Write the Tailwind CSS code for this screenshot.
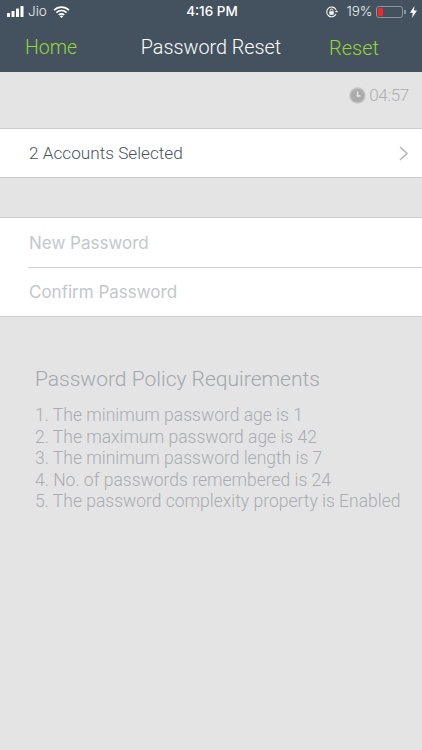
<!DOCTYPE html>
<html>
<head>
<meta charset="utf-8">
<script src="https://cdn.jsdelivr.net/npm/@tailwindcss/browser@4"></script>
</head>
<body class="bg-[#e4e4e4] font-['Roboto',sans-serif]">
<div class="w-[422px] h-[750px] overflow-hidden flex flex-col bg-[#e4e4e4]">
  <header class="h-[72px] bg-[#44525f] text-white flex flex-col">
    <div class="h-[24px] flex items-center justify-between pl-[7px] pr-[5px] font-['Inter',sans-serif] text-[14px] leading-none">
      <div class="w-[120px] flex items-center gap-[4px]">
        <svg width="18" height="12" viewBox="0 0 18 12" fill="#fff"><rect x="0" y="7" width="3" height="4" rx=".6"/><rect x="4.5" y="5" width="3" height="6" rx=".6"/><rect x="9" y="2.5" width="3" height="8.5" rx=".6"/><rect x="13.5" y="0" width="3" height="11" rx=".6"/></svg>
        <span class="text-[13.5px] font-light text-[#e8ebee] -ml-[1px]">Jio</span>
        <svg class="ml-[2px]" width="17" height="12" viewBox="0 0 17 12"><path d="M1 4.2a10.6 10.6 0 0 1 15 0M3.4 6.6a7.2 7.2 0 0 1 10.2 0M5.8 9a3.8 3.8 0 0 1 5.4 0" fill="none" stroke="#fff" stroke-width="1.7"/><path d="M8.5 12l-1.7-1.7a2.4 2.4 0 0 1 3.4 0z" fill="#fff"/></svg>
      </div>
      <span class="font-medium text-[13.5px]">4:16 PM</span>
      <div class="w-[120px] flex items-center justify-end">
        <svg width="14" height="14" viewBox="0 0 16 14" class="mr-[7px]"><path d="M12.6 9.4A5.6 5.6 0 1 1 12.6 4.4" fill="none" stroke="#fff" stroke-width="1.2"/><path d="M11 7l2.4-2 1.6 2.2z" fill="#fff"/><rect x="5" y="6" width="5" height="4" rx=".6" fill="#fff"/><path d="M6 6V5a1.5 1.5 0 0 1 3 0v1" fill="none" stroke="#fff" stroke-width="1"/></svg>
        <span class="text-[13.5px] font-light text-[#eef0f2]">19%</span>
        <div class="ml-[4px] w-[27px] h-[12px] rounded-[3px] border border-[#8d969f] p-[1px] flex"><div class="w-[5px] bg-[#f0262b] rounded-[1px]"></div></div>
        <div class="w-[1.5px] h-[4px] bg-[#8d969f] ml-[1px]"></div>
        <svg class="ml-[4px]" width="7" height="12" viewBox="0 0 7 12" fill="#fff"><path d="M4.4 0L0 6.8h2.8L2 12l5-7.4H4z"/></svg>
      </div>
    </div>
    <nav class="flex-1 grid grid-cols-[1fr_auto_1fr] items-center pl-[25px] pr-[43px] pb-[1px]">
      <span class="text-[#97d63a] text-[19.5px] font-light">Home</span>
      <span class="font-light text-[19.8px] pl-[18px]">Password Reset</span>
      <span class="text-[#97d63a] text-[20px] font-light text-right">Reset</span>
    </nav>
  </header>

  <div class="h-[56px] flex justify-end items-start pt-[14px] pr-[13px]">
    <div class="flex items-center gap-[3px] text-[#aeaeae] text-[17px] tracking-[-0.3px] leading-[18px] font-light">
      <svg width="17" height="17" viewBox="0 0 17 17"><circle cx="8.5" cy="8.5" r="8.3" fill="#c4c4c4"/><circle cx="8.5" cy="8.5" r="6.8" fill="#ababab"/><path d="M8.5 4.5v4.5h3" fill="none" stroke="#ececec" stroke-width="1.3"/></svg>
      <span>04:57</span>
    </div>
  </div>

  <div class="h-[50px] bg-white border-y border-[#cccccc] flex items-center justify-between pl-[29px] pr-[13px]">
    <span class="text-[17.2px] font-light text-[#4a545e] pt-[2px]">2 Accounts Selected</span>
    <svg width="10" height="15" viewBox="0 0 10 15"><path d="M1 1l7 6.5L1 14" fill="none" stroke="#b8b8b8" stroke-width="1.6"/></svg>
  </div>

  <div class="h-[39px]"></div>

  <div class="h-[100px] bg-white border-y border-[#cccccc] pl-[28px] flex flex-col font-['Inter',sans-serif] text-[17px] text-[#c4c7cb]">
    <div class="h-[50px] border-b border-[#d2d2d2] flex items-center pl-[1px] pt-[3px]">New Password</div>
    <div class="flex-1 flex items-center pl-[1px] pt-[2px]">Confirm Password</div>
  </div>

  <section class="pl-[35px] pt-[49px]">
    <h2 class="text-[21px] leading-[26px] text-[#a3a7ab] font-light">Password Policy Requirements</h2>
    <ol class="mt-[13px] text-[17.5px] leading-[21.5px] text-[#a9acb0] font-light">
      <li>1. The minimum password age is 1</li>
      <li>2. The maximum password age is 42</li>
      <li>3. The minimum password length is 7</li>
      <li>4. No. of passwords remembered is 24</li>
      <li>5. The password complexity property is Enabled</li>
    </ol>
  </section>
</div>
</body>
</html>
